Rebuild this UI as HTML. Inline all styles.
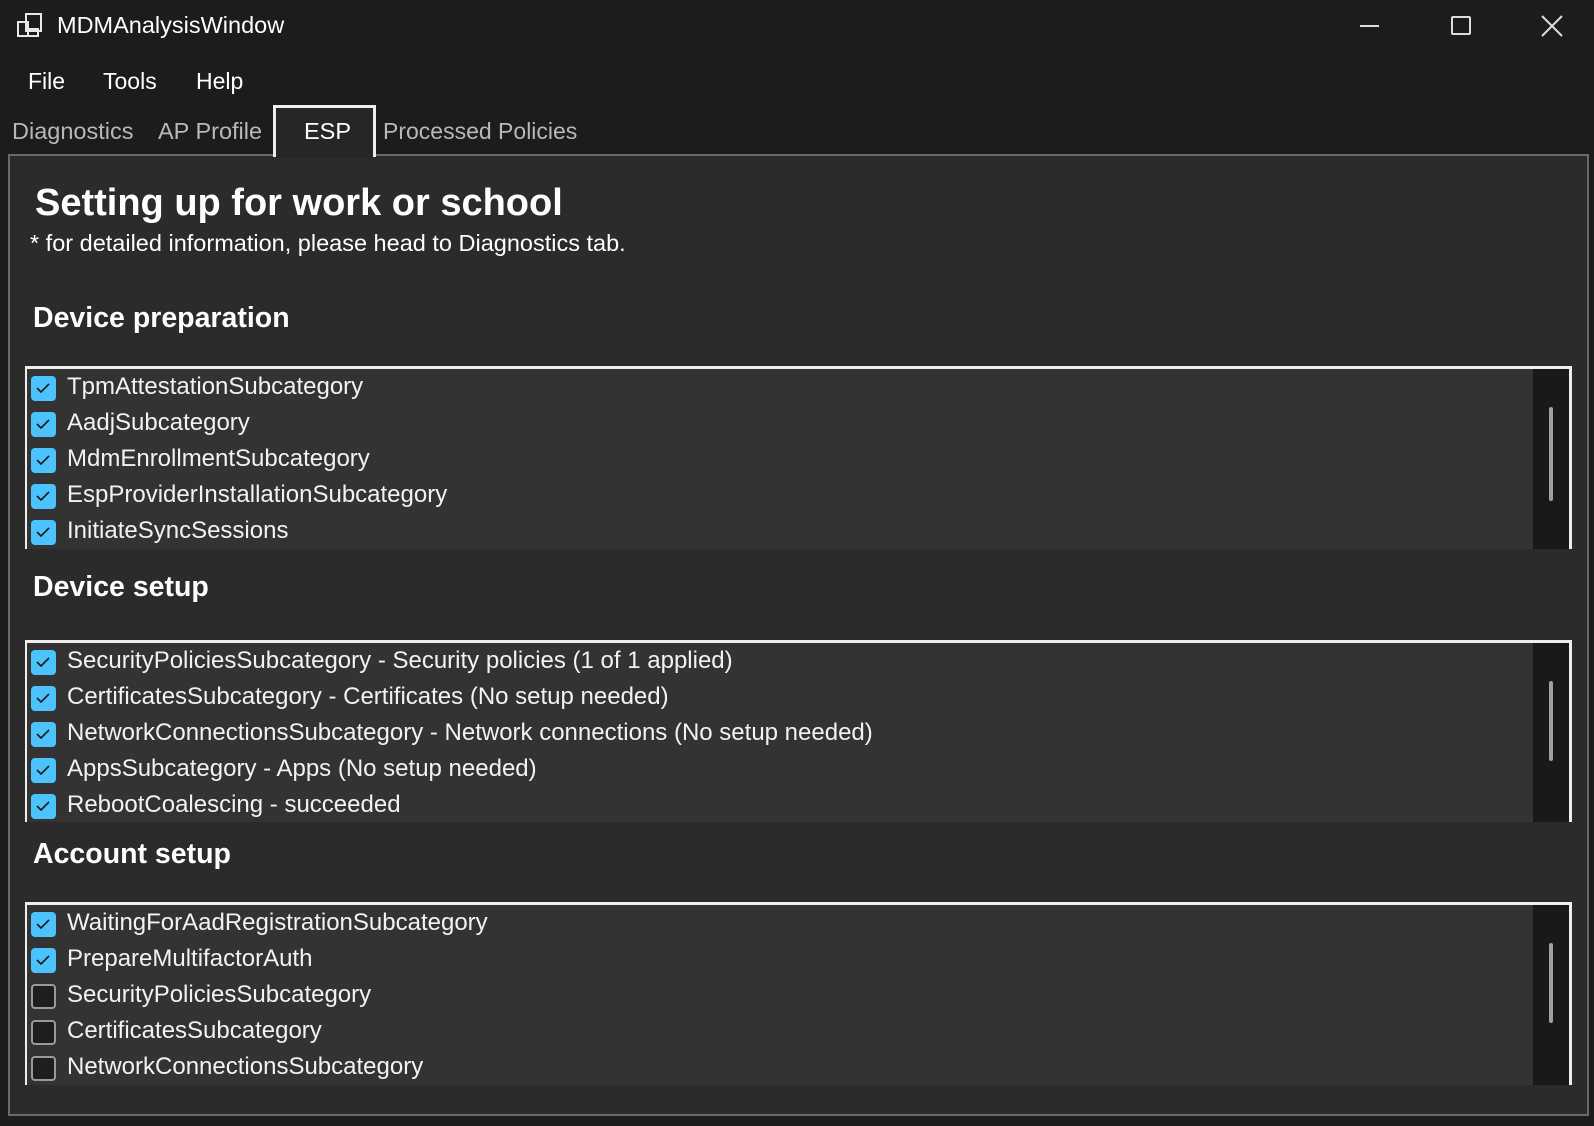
<!DOCTYPE html>
<html><head><meta charset="utf-8"><style>
*{margin:0;padding:0;box-sizing:border-box}
body{width:1594px;height:1126px;background:#1c1c1c;font-family:"Liberation Sans",sans-serif;color:#fff;position:relative;overflow:hidden}
.a{position:absolute;white-space:nowrap}
.panel{position:absolute;left:8px;top:154px;width:1581px;height:962px;background:#2b2b2b;border:2px solid #6a6a6a}
.list{position:absolute;left:25px;width:1547px;background:#333;border-top:3px solid #eee;border-left:2px solid #eee;border-right:3px solid #eee}
.sb{position:absolute;right:0;top:0;bottom:0;width:36px;background:#191919}
.th{position:absolute;left:16px;width:4px;background:#a0a0a0;border-radius:2px}
.it{position:absolute;left:4px;height:36px;font-size:24px;line-height:34px;color:#f2f2f2;white-space:nowrap}
.cb{position:absolute;left:0;top:6px;width:25px;height:25px;border-radius:4px;background:#4cc2ff}
.cb svg{position:absolute;left:5px;top:6px}
.cb.off{background:#1e1e1e;border:2px solid #9a9a9a}
.it span{position:absolute;left:36px;top:0;white-space:nowrap}
h2{position:absolute;left:33px;font-size:28.5px;font-weight:bold;white-space:nowrap}
</style></head><body>
<svg class="a" style="left:16px;top:12px" width="28" height="28" viewBox="0 0 28 28" fill="none" stroke="#e8e8e8" stroke-width="2"><rect x="10" y="2" width="15" height="17"/><rect x="2" y="10" width="10" height="14"/><rect x="12" y="17" width="10" height="7"/></svg>
<div class="a" style="left:57px;top:12px;font-size:23.5px">MDMAnalysisWindow</div>
<div class="a" style="left:1360px;top:25px;width:19px;height:2px;background:#ddd"></div>
<div class="a" style="left:1451px;top:16px;width:20px;height:19px;border:2px solid #ddd;border-radius:2px"></div>
<svg class="a" style="left:1540px;top:14px" width="24" height="24" viewBox="0 0 24 24" stroke="#ddd" stroke-width="2"><path d="M2 2L22 22M22 2L2 22"/></svg>
<div class="a" style="left:28px;top:68px;font-size:23px">File</div>
<div class="a" style="left:103px;top:68px;font-size:23px">Tools</div>
<div class="a" style="left:196px;top:68px;font-size:23px">Help</div>
<div class="a" style="left:12px;top:118px;font-size:23.5px;color:#b8b8b8">Diagnostics</div>
<div class="a" style="left:158px;top:118px;font-size:23.5px;color:#b8b8b8">AP Profile</div>
<div class="a" style="left:273px;top:105px;width:103px;height:52px;background:#262626;border:3px solid #eee;border-bottom:none;z-index:2"></div>
<div class="a" style="left:304px;top:118px;font-size:23.5px;z-index:3">ESP</div>
<div class="a" style="left:383px;top:118px;font-size:23px;color:#b8b8b8">Processed Policies</div>
<div class="panel"></div>
<div class="a" style="left:35px;top:182px;font-size:38px;font-weight:bold">Setting up for work or school</div>
<div class="a" style="left:30px;top:230px;font-size:23.5px">* for detailed information, please head to Diagnostics tab.</div>
<h2 style="top:302px">Device preparation</h2>
<div class="list" style="top:366px;height:183px"><div class="sb"><div class="th" style="top:38px;height:94px"></div></div>
<div class="it" style="top:1px"><div class="cb"><svg width="14" height="12"><path d="M1 6l4 4 8-8" stroke="#1a1a1a" stroke-width="1.6" fill="none"/></svg></div><span>TpmAttestationSubcategory</span></div>
<div class="it" style="top:37px"><div class="cb"><svg width="14" height="12"><path d="M1 6l4 4 8-8" stroke="#1a1a1a" stroke-width="1.6" fill="none"/></svg></div><span>AadjSubcategory</span></div>
<div class="it" style="top:73px"><div class="cb"><svg width="14" height="12"><path d="M1 6l4 4 8-8" stroke="#1a1a1a" stroke-width="1.6" fill="none"/></svg></div><span>MdmEnrollmentSubcategory</span></div>
<div class="it" style="top:109px"><div class="cb"><svg width="14" height="12"><path d="M1 6l4 4 8-8" stroke="#1a1a1a" stroke-width="1.6" fill="none"/></svg></div><span>EspProviderInstallationSubcategory</span></div>
<div class="it" style="top:145px"><div class="cb"><svg width="14" height="12"><path d="M1 6l4 4 8-8" stroke="#1a1a1a" stroke-width="1.6" fill="none"/></svg></div><span>InitiateSyncSessions</span></div>
</div>
<h2 style="top:571px">Device setup</h2>
<div class="list" style="top:640px;height:182px"><div class="sb"><div class="th" style="top:38px;height:80px"></div></div>
<div class="it" style="top:1px"><div class="cb"><svg width="14" height="12"><path d="M1 6l4 4 8-8" stroke="#1a1a1a" stroke-width="1.6" fill="none"/></svg></div><span>SecurityPoliciesSubcategory - Security policies (1 of 1 applied)</span></div>
<div class="it" style="top:37px"><div class="cb"><svg width="14" height="12"><path d="M1 6l4 4 8-8" stroke="#1a1a1a" stroke-width="1.6" fill="none"/></svg></div><span>CertificatesSubcategory - Certificates (No setup needed)</span></div>
<div class="it" style="top:73px"><div class="cb"><svg width="14" height="12"><path d="M1 6l4 4 8-8" stroke="#1a1a1a" stroke-width="1.6" fill="none"/></svg></div><span>NetworkConnectionsSubcategory - Network connections (No setup needed)</span></div>
<div class="it" style="top:109px"><div class="cb"><svg width="14" height="12"><path d="M1 6l4 4 8-8" stroke="#1a1a1a" stroke-width="1.6" fill="none"/></svg></div><span>AppsSubcategory - Apps (No setup needed)</span></div>
<div class="it" style="top:145px"><div class="cb"><svg width="14" height="12"><path d="M1 6l4 4 8-8" stroke="#1a1a1a" stroke-width="1.6" fill="none"/></svg></div><span>RebootCoalescing - succeeded</span></div>
</div>
<h2 style="top:838px">Account setup</h2>
<div class="list" style="top:902px;height:183px"><div class="sb"><div class="th" style="top:38px;height:80px"></div></div>
<div class="it" style="top:1px"><div class="cb"><svg width="14" height="12"><path d="M1 6l4 4 8-8" stroke="#1a1a1a" stroke-width="1.6" fill="none"/></svg></div><span>WaitingForAadRegistrationSubcategory</span></div>
<div class="it" style="top:37px"><div class="cb"><svg width="14" height="12"><path d="M1 6l4 4 8-8" stroke="#1a1a1a" stroke-width="1.6" fill="none"/></svg></div><span>PrepareMultifactorAuth</span></div>
<div class="it" style="top:73px"><div class="cb off"></div><span>SecurityPoliciesSubcategory</span></div>
<div class="it" style="top:109px"><div class="cb off"></div><span>CertificatesSubcategory</span></div>
<div class="it" style="top:145px"><div class="cb off"></div><span>NetworkConnectionsSubcategory</span></div>
</div>
</body></html>
